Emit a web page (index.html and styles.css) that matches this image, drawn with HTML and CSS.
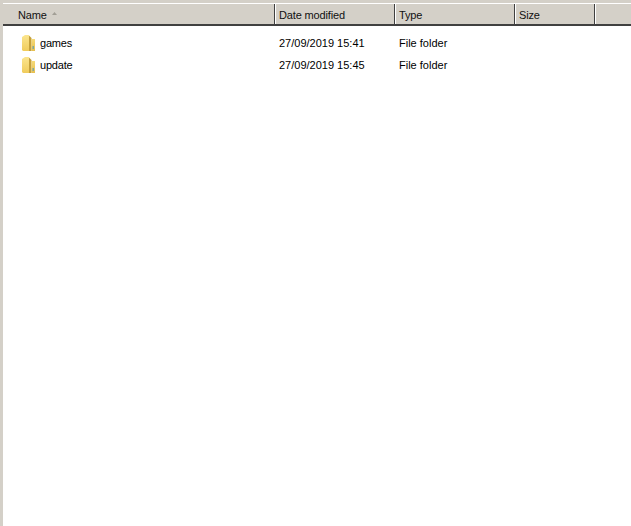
FILE: index.html
```html
<!DOCTYPE html>
<html lang="en">
<head>
<meta charset="utf-8">
<title>Explorer</title>
<link rel="stylesheet" href="styles.css">
</head>
<body>
<div class="frame">
  <div class="header">
    <div class="col col-name"><span>Name</span><svg class="sort" width="5" height="3" viewBox="0 0 5 3"><path d="M2.5 0 L5 3 H0 Z" fill="#a19e95"/></svg></div>
    <div class="col col-date">Date modified</div>
    <div class="col col-type">Type</div>
    <div class="col col-size">Size</div>
    <div class="col col-rest"></div>
  </div>
  <div class="rows">
    <div class="row">
      <div class="cell-name">
        <svg class="folder" width="13" height="16" viewBox="0 0 13 16"><defs><linearGradient id="fl" x1="0" y1="0" x2="0" y2="1"><stop offset="0" stop-color="#fbe58e"/><stop offset="1" stop-color="#f0cc5c"/></linearGradient><linearGradient id="fr" x1="0" y1="0" x2="0" y2="1"><stop offset="0" stop-color="#f6da78"/><stop offset="1" stop-color="#e6bf50"/></linearGradient></defs><path d="M0 2 L3 0 H7 V16 H1 L0 15 Z" fill="url(#fl)"/><path d="M7 0.5 L9.5 3 V16 H7 Z" fill="#c4a03c"/><path d="M9.5 4 H13 V16 H9.5 Z" fill="url(#fr)"/><rect x="10.5" y="11" width="1.5" height="3" fill="#7fa7a0"/></svg>
        <span>games</span>
      </div>
      <div class="cell-date">27/09/2019 15:41</div>
      <div class="cell-type">File folder</div>
    </div>
    <div class="row">
      <div class="cell-name">
        <svg class="folder" width="13" height="16" viewBox="0 0 13 16"><path d="M0 2 L3 0 H7 V16 H1 L0 15 Z" fill="url(#fl)"/><path d="M7 0.5 L9.5 3 V16 H7 Z" fill="#c4a03c"/><path d="M9.5 4 H13 V16 H9.5 Z" fill="url(#fr)"/><rect x="10.5" y="11" width="1.5" height="3" fill="#7fa7a0"/></svg>
        <span>update</span>
      </div>
      <div class="cell-date">27/09/2019 15:45</div>
      <div class="cell-type">File folder</div>
    </div>
  </div>
</div>
</body>
</html>
```
FILE: styles.css
```css
html, body {
  margin: 0;
  padding: 0;
  height: 100%;
  overflow: hidden;
  background: #d4d0c8;
}
.frame {
  height: 526px;
  box-sizing: border-box;
  padding: 3px 0 0 3px;
  display: flex;
  flex-direction: column;
  font: 11px/13px "Liberation Sans", Arial, sans-serif;
  color: #000;
}
.header {
  display: flex;
  height: 23px;
  box-sizing: border-box;
  border-top: 1px solid #fff;
  border-bottom: 2px solid #404040;
  background: #d4d0c8;
  letter-spacing: -0.15px;
}
.col {
  box-sizing: border-box;
  display: flex;
  align-items: center;
  padding: 2px 0 0 3px;
  color: #111;
  border-right: 1px solid #fff;
  box-shadow: inset -1px 0 0 #404040;
}
.col-name { width: 273px; padding-left: 15px; gap: 5px; }
.col-date { width: 120px; }
.col-type { width: 120px; }
.col-size { width: 80px; }
.col-rest { flex: 1; border-right: 0; box-shadow: none; }
.sort { margin-top: -4px; }
.rows {
  flex: 1;
  background: #fff;
  padding-top: 7px;
  display: flex;
  flex-direction: column;
  gap: 2px;
}
.row {
  display: flex;
  height: 20px;
  align-items: center;
}
.cell-name {
  width: 273px;
  display: flex;
  align-items: center;
  padding-left: 19px;
  box-sizing: border-box;
  gap: 5px;
  letter-spacing: -0.2px;
}
.cell-date { width: 120px; padding-left: 3px; box-sizing: border-box; }
.cell-type { width: 120px; padding-left: 3px; box-sizing: border-box; }
```
